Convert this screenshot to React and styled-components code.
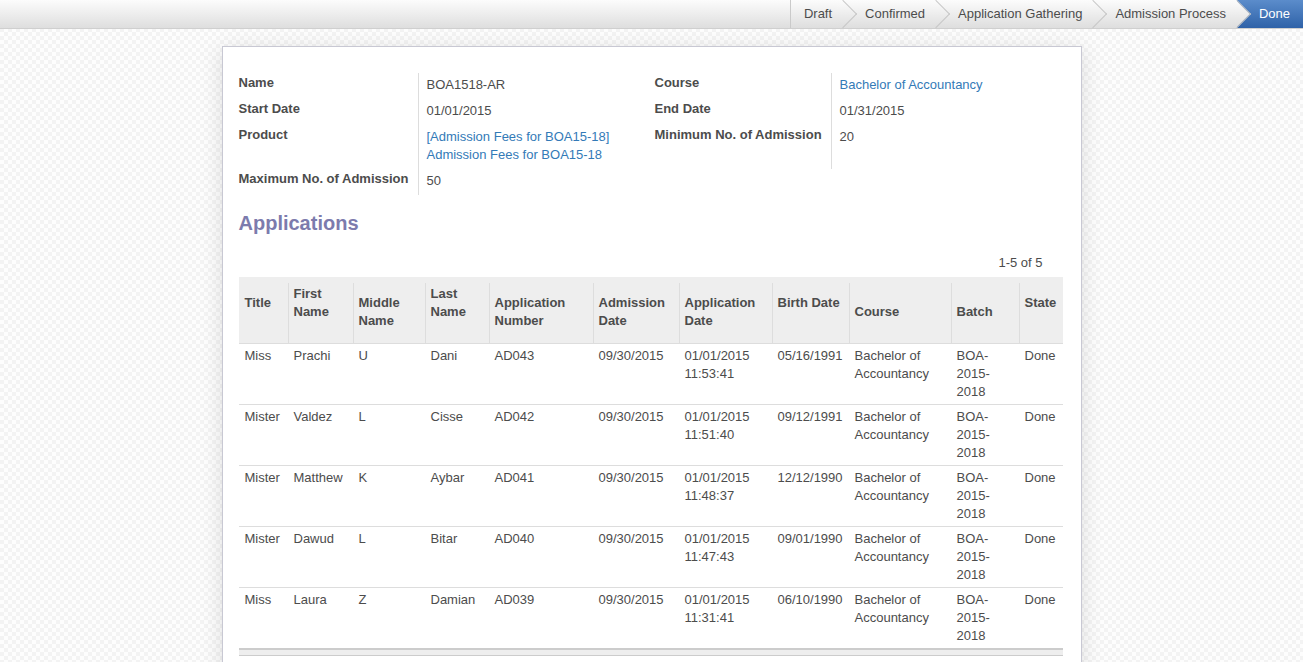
import React from 'react'
import styled, { createGlobalStyle, css } from 'styled-components'

const GlobalStyle = createGlobalStyle`
  html, body {
    margin: 0;
    padding: 0;
  }
  body {
    font-family: "Liberation Sans", Arial, sans-serif;
    font-size: 13px;
    color: #4c4c4c;
    background-color: #fbfbfb;
    background-image: conic-gradient(#f3f3f3 25%, #fdfdfd 0 50%, #f3f3f3 0 75%, #fdfdfd 0);
    background-size: 8px 8px;
  }
`

const StatusBar = styled.div`
  height: 28px;
  border-bottom: 1px solid #cfcfcf;
  background: linear-gradient(#fcfcfc, #dedede);
  display: flex;
  justify-content: flex-end;
`

const Steps = styled.ul`
  list-style: none;
  margin: 0;
  padding: 0;
  display: flex;
`

const Step = styled.li`
  position: relative;
  display: flex;
  align-items: center;
  height: 28px;
  box-sizing: border-box;
  padding: 0 ${p => (p.$last ? '13px' : '11px')} 2px ${p => (p.$first ? '13px' : '22px')};
  border-left: ${p => (p.$first ? '1px solid #cacaca' : 'none')};
  color: ${p => (p.$active ? '#fff' : '#4c4c4c')};
  background: ${p => (p.$active ? 'linear-gradient(#5b8ccb, #2f62a8)' : 'linear-gradient(#fcfcfc, #dedede)')};
  ${p => !p.$last && css`
    &::after {
      content: '';
      position: absolute;
      top: 4px;
      right: -10px;
      width: 19px;
      height: 19px;
      transform: rotate(45deg);
      background: linear-gradient(to bottom right, #fcfcfc, #dedede);
      border-top: 1px solid #c6c6c6;
      border-right: 1px solid #c6c6c6;
      z-index: 1;
    }
  `}
`

const StepText = styled.span`
  position: relative;
  z-index: 2;
  white-space: nowrap;
`

const Sheet = styled.div`
  width: 860px;
  box-sizing: border-box;
  margin: 17px auto 0;
  padding: 26px 18px 40px 16px;
  background: #fff;
  border: 1px solid #c8c8d3;
  box-shadow: 0 4px 20px rgba(0, 0, 0, 0.12);
`

const InfoTable = styled.table`
  width: 824px;
  table-layout: fixed;
  border-collapse: separate;
  border-spacing: 0;
`

const Col = styled.col`
  width: ${p => p.$w}px;
`

const FieldLabel = styled.th`
  text-align: left;
  font-weight: bold;
  line-height: 18px;
  vertical-align: top;
  white-space: nowrap;
  padding: 1px 8px 7px ${p => (p.$inset ? '4px' : '0')};
  border-right: 1px solid #ddd;
`

const FieldValue = styled.td`
  line-height: 18px;
  vertical-align: top;
  padding: 3px 8px 5px;
`

const Link = styled.a`
  color: #337ab7;
  text-decoration: none;
  display: block;
`

const Heading = styled.h2`
  margin: 17px 0 0;
  font-size: 20px;
  line-height: 22px;
  font-weight: bold;
  color: #7c7bad;
`

const Pager = styled.div`
  margin-top: 20px;
  line-height: 18px;
  text-align: right;
  padding-right: 20px;
`

const ListTable = styled.table`
  margin-top: 5px;
  width: 824px;
  table-layout: fixed;
  border-collapse: collapse;
`

const HeadCell = styled.th`
  text-align: left;
  font-weight: bold;
  line-height: 18px;
  vertical-align: middle;
  padding: 8px 6px ${p => 4 + p.$extra * 18}px;
  background-color: #eee;
  border-bottom: 1px solid #ddd;
  ${p => !p.$first && css`
    background-image: linear-gradient(#ddd, #ddd);
    background-repeat: no-repeat;
    background-size: 1px calc(100% - 6px);
    background-position: left bottom;
  `}
`

const Row = styled.tr`
  border-top: 1px solid #ddd;
`

const Cell = styled.td`
  line-height: 18px;
  vertical-align: top;
  padding: 3px 6px 3px;
`

const FootCell = styled.td`
  height: 5px;
  padding: 0;
  background: #eee;
  border-top: 2px solid #ccc;
  border-bottom: 1px solid #ccc;
`

const steps = ['Draft', 'Confirmed', 'Application Gathering', 'Admission Process', 'Done']

const columns = [
  { label: 'Title', w: 49, extra: 1 },
  { label: 'First Name', w: 65, extra: 1 },
  { label: 'Middle Name', w: 72, extra: 0 },
  { label: 'Last Name', w: 64, extra: 1 },
  { label: 'Application Number', w: 104, extra: 0 },
  { label: 'Admission Date', w: 86, extra: 0 },
  { label: 'Application Date', w: 93, extra: 0 },
  { label: 'Birth Date', w: 77, extra: 1 },
  { label: 'Course', w: 102, extra: 0 },
  { label: 'Batch', w: 68, extra: 0 },
  { label: 'State', w: 44, extra: 1 },
]

const applications = [
  ['Miss', 'Prachi', 'U', 'Dani', 'AD043', '09/30/2015', '01/01/2015 11:53:41', '05/16/1991'],
  ['Mister', 'Valdez', 'L', 'Cisse', 'AD042', '09/30/2015', '01/01/2015 11:51:40', '09/12/1991'],
  ['Mister', 'Matthew', 'K', 'Aybar', 'AD041', '09/30/2015', '01/01/2015 11:48:37', '12/12/1990'],
  ['Mister', 'Dawud', 'L', 'Bitar', 'AD040', '09/30/2015', '01/01/2015 11:47:43', '09/01/1990'],
  ['Miss', 'Laura', 'Z', 'Damian', 'AD039', '09/30/2015', '01/01/2015 11:31:41', '06/10/1990'],
]

export default function App() {
  return (
    <>
      <GlobalStyle />
      <StatusBar>
        <Steps>
          {steps.map((s, i) => (
            <Step
              key={s}
              $first={i === 0}
              $last={i === steps.length - 1}
              $active={s === 'Done'}
            >
              <StepText>{s}</StepText>
            </Step>
          ))}
        </Steps>
      </StatusBar>

      <Sheet>
        <InfoTable>
          <colgroup>
            <Col $w={180} />
            <Col $w={232} />
            <Col $w={181} />
            <Col $w={231} />
          </colgroup>
          <tbody>
            <tr>
              <FieldLabel>Name</FieldLabel>
              <FieldValue>BOA1518-AR</FieldValue>
              <FieldLabel $inset>Course</FieldLabel>
              <FieldValue><Link href="#">Bachelor of Accountancy</Link></FieldValue>
            </tr>
            <tr>
              <FieldLabel>Start Date</FieldLabel>
              <FieldValue>01/01/2015</FieldValue>
              <FieldLabel $inset>End Date</FieldLabel>
              <FieldValue>01/31/2015</FieldValue>
            </tr>
            <tr>
              <FieldLabel>Product</FieldLabel>
              <FieldValue>
                <Link href="#">[Admission Fees for BOA15-18] Admission Fees for BOA15-18</Link>
              </FieldValue>
              <FieldLabel $inset>Minimum No. of Admission</FieldLabel>
              <FieldValue>20</FieldValue>
            </tr>
            <tr>
              <FieldLabel>Maximum No. of Admission</FieldLabel>
              <FieldValue>50</FieldValue>
              <td colSpan={2} />
            </tr>
          </tbody>
        </InfoTable>

        <Heading>Applications</Heading>
        <Pager>1-5 of 5</Pager>

        <ListTable>
          <colgroup>
            {columns.map(c => <Col key={c.label} $w={c.w} />)}
          </colgroup>
          <thead>
            <tr>
              {columns.map((c, i) => (
                <HeadCell key={c.label} $first={i === 0} $extra={c.extra}>{c.label}</HeadCell>
              ))}
            </tr>
          </thead>
          <tbody>
            {applications.map(a => (
              <Row key={a[4]}>
                {a.map((v, i) => <Cell key={i}>{v}</Cell>)}
                <Cell>Bachelor of Accountancy</Cell>
                <Cell>BOA-2015-2018</Cell>
                <Cell>Done</Cell>
              </Row>
            ))}
          </tbody>
          <tfoot>
            <tr>
              <FootCell colSpan={11} />
            </tr>
          </tfoot>
        </ListTable>
      </Sheet>
    </>
  )
}
